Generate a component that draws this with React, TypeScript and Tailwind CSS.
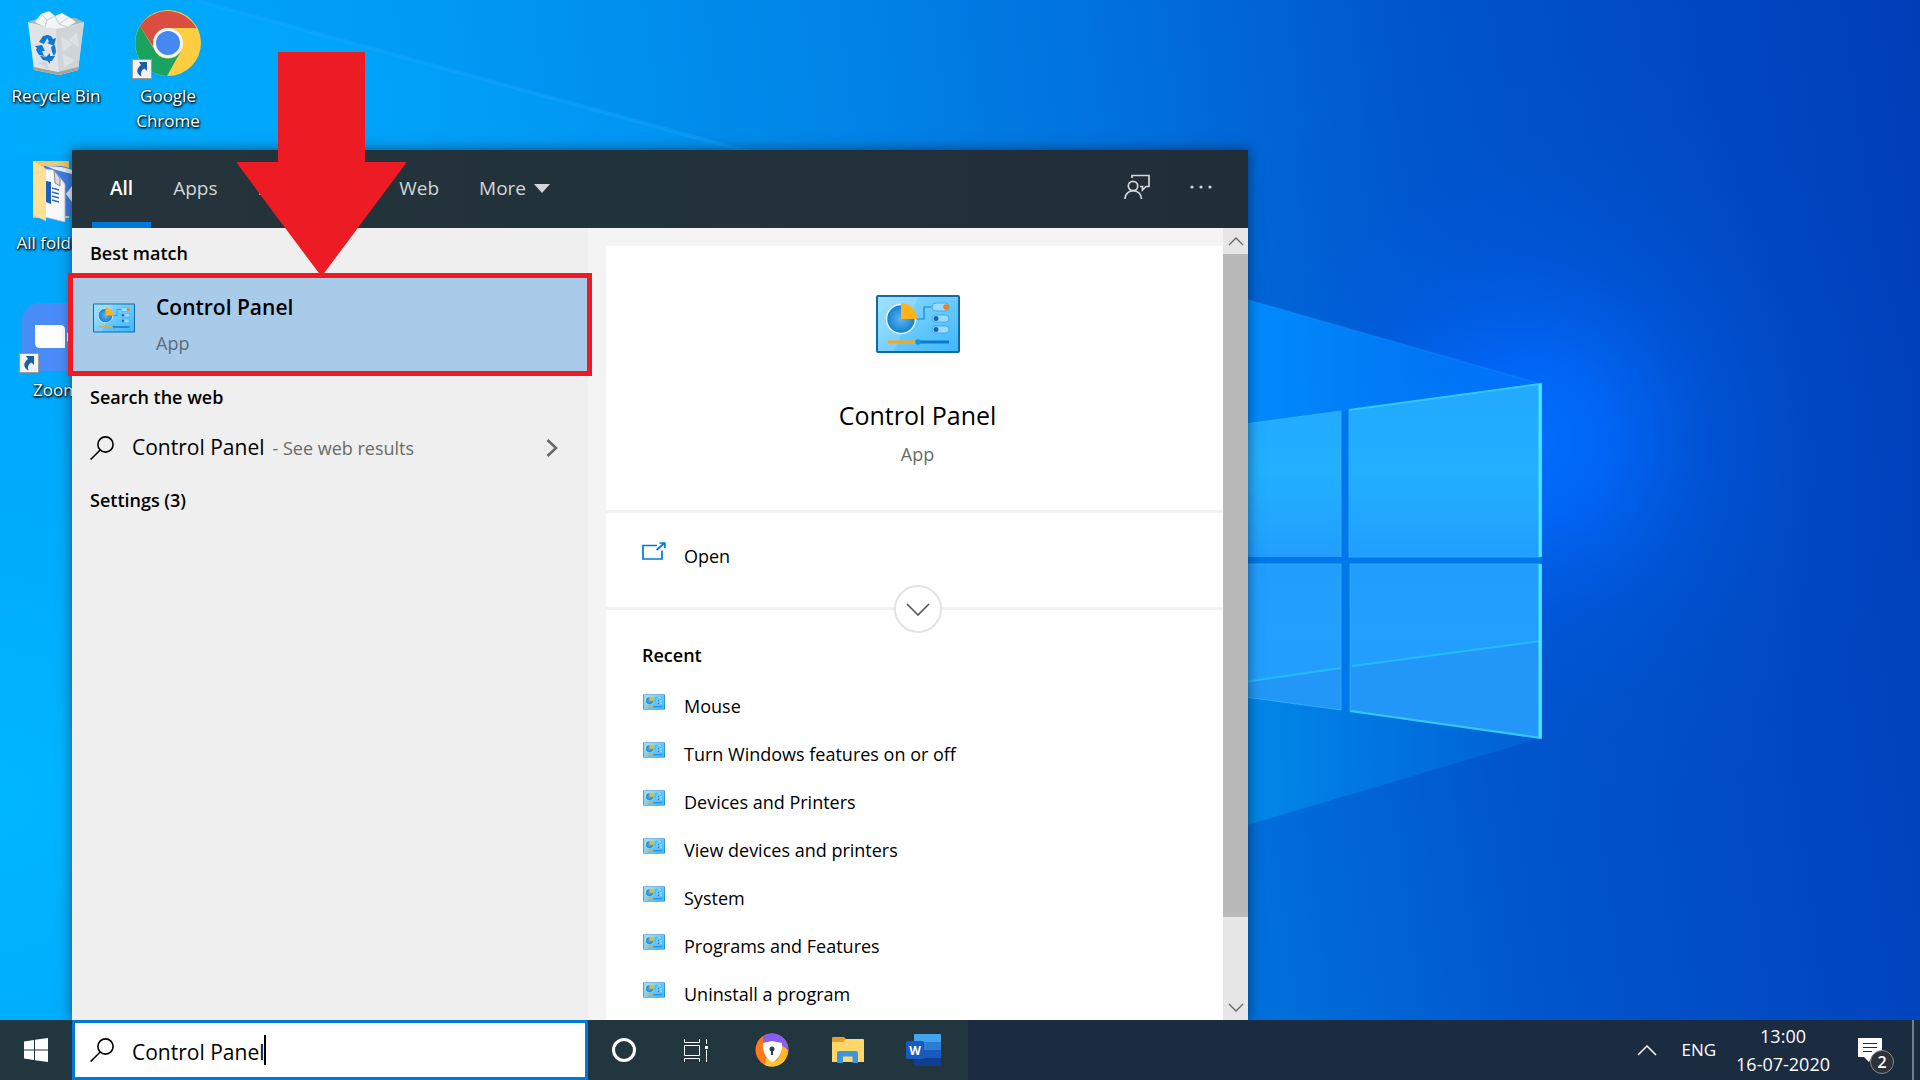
import { useId, useState } from "react";
import type { ReactNode } from "react";

type IconProps = { className?: string };

const tabs = ["All", "Apps", "Documents", "Web"];

const recentItems = [
  "Mouse",
  "Turn Windows features on or off",
  "Devices and Printers",
  "View devices and printers",
  "System",
  "Programs and Features",
  "Uninstall a program",
];

function Wallpaper() {
  return (
    <svg
      className="absolute inset-0 h-full w-full"
      viewBox="0 0 1920 1080"
      preserveAspectRatio="none"
      aria-hidden="true"
    >
      <defs>
        <linearGradient id="sky" x1="0" y1="0" x2="1880" y2="-250" gradientUnits="userSpaceOnUse">
          <stop offset="0" stopColor="#00a9fc" />
          <stop offset="0.2" stopColor="#009cf5" />
          <stop offset="0.42" stopColor="#0086e8" />
          <stop offset="0.6" stopColor="#006edb" />
          <stop offset="0.74" stopColor="#0055cc" />
          <stop offset="0.88" stopColor="#0049c3" />
          <stop offset="1" stopColor="#003eb8" />
        </linearGradient>
        <radialGradient id="glow" cx="1530" cy="440" r="400" gradientUnits="userSpaceOnUse">
          <stop offset="0" stopColor="#006eff" />
          <stop offset="0.2" stopColor="#006aff" stopOpacity="0.8" />
          <stop offset="0.45" stopColor="#005fea" stopOpacity="0.4" />
          <stop offset="0.7" stopColor="#0057da" stopOpacity="0.15" />
          <stop offset="1" stopColor="#0050d0" stopOpacity="0" />
        </radialGradient>
        <radialGradient id="corner" cx="0" cy="800" r="700" gradientUnits="userSpaceOnUse">
          <stop offset="0" stopColor="#00b7ff" />
          <stop offset="1" stopColor="#00a0fa" stopOpacity="0" />
        </radialGradient>
        <linearGradient id="ray" x1="200" y1="0" x2="760" y2="0" gradientUnits="userSpaceOnUse">
          <stop offset="0" stopColor="#00b0ff" stopOpacity="0.45" />
          <stop offset="1" stopColor="#00a0ff" stopOpacity="0.25" />
        </linearGradient>
        <linearGradient id="beam" x1="1240" y1="0" x2="1541" y2="0" gradientUnits="userSpaceOnUse">
          <stop offset="0" stopColor="#008cff" />
          <stop offset="1" stopColor="#0080ff" stopOpacity="0.4" />
        </linearGradient>
        <linearGradient id="lowBeam" x1="1240" y1="0" x2="1541" y2="0" gradientUnits="userSpaceOnUse">
          <stop offset="0" stopColor="#0089e8" />
          <stop offset="1" stopColor="#006fe0" stopOpacity="0.4" />
        </linearGradient>
        <linearGradient id="pane" x1="0" y1="383" x2="0" y2="738" gradientUnits="userSpaceOnUse">
          <stop offset="0" stopColor="#21a9ff" />
          <stop offset="0.25" stopColor="#22b0ff" />
          <stop offset="0.5" stopColor="#219dff" />
          <stop offset="1" stopColor="#22a0fd" />
        </linearGradient>
      </defs>
      <rect width="1920" height="1080" fill="url(#sky)" />
      <rect width="1920" height="1080" fill="url(#corner)" />
      <rect width="1920" height="1080" fill="url(#glow)" />
      <path d="M195 0 760 155H0V0Z" fill="url(#ray)" />
      <path d="M195 0 760 155" stroke="#20acff" strokeOpacity="0.3" strokeWidth="4" />
      <path d="M1200 286 1541 384V560H1200Z" fill="url(#beam)" />
      <path d="M1200 560H1541V738L1200 839Z" fill="url(#lowBeam)" />
      <path d="M1200 286 1541 384" stroke="#2aa2ff" strokeOpacity="0.2" strokeWidth="2" />
      <path d="M1230 557h311v7H1230zM1341 411 1349 410V711L1341 710Z" fill="#0077ea" />
      <g fill="url(#pane)">
        <path d="M1230 426 1341 411V557H1230Z" />
        <path d="M1349 410 1541 383V557H1349Z" />
        <path d="M1230 564H1341V710L1230 695Z" />
        <path d="M1350 564H1541V738L1350 711Z" />
      </g>
      <path d="M1230 684 1341 668V710L1230 695ZM1350 666 1541 641V738L1350 711Z" fill="#2494f5" opacity="0.75" />
      <path d="M1230 684 1341 668M1352 666 1541 641" stroke="#22bcff" strokeWidth="2" fill="none" />
      <path
        d="M1230 426 1341 411V557M1349 410V557H1541M1230 564h111V710L1230 695M1350 711V564H1541"
        stroke="#35b8ff"
        strokeOpacity="0.7"
        fill="none"
      />
      <path d="M1349 410 1541 384V557M1541 564V738L1350 711" stroke="#35c8ff" strokeWidth="2" fill="none" />
      <path d="M1540 384V557M1540 564V738" stroke="#45e6ff" strokeWidth="3" fill="none" />
    </svg>
  );
}

function ControlPanelIcon({ className }: IconProps) {
  const id = useId();
  return (
    <svg viewBox="0 0 84 60" className={className} aria-hidden="true">
      <defs>
        <linearGradient id={`${id}-bg`} x1="0" y1="0" x2="1" y2="1">
          <stop offset="0" stopColor="#8fdcff" />
          <stop offset="1" stopColor="#3fb8f9" />
        </linearGradient>
        <radialGradient id={`${id}-pie`}>
          <stop offset="0" stopColor="#5fb6ee" />
          <stop offset="1" stopColor="#0f7fd0" />
        </radialGradient>
      </defs>
      <rect x="0" y="1" width="84" height="58" rx="2" fill="#0f6ba6" />
      <rect x="2" y="3" width="80" height="54" fill={`url(#${id}-bg)`} />
      <path d="M2 3H42L18 57H2Z" fill="#fff" opacity="0.15" />
      <circle cx="25" cy="25" r="14.500" fill={`url(#${id}-pie)`} stroke="#e9f6ff" strokeWidth="1.500" />
      <path d="M25 25V9A16 16 0 0 1 41 25Z" fill="#ffb31a" />
      <path d="M41 25H48V13H56" fill="none" stroke="#1583cc" strokeWidth="1.200" />
      <g fill="#9adcff" stroke="#3d9dda" strokeWidth="0.800">
        <rect x="56" y="9" width="17" height="8" rx="4" />
        <rect x="56" y="21" width="17" height="7" rx="3.500" />
        <rect x="56" y="32" width="17" height="7" rx="3.500" />
      </g>
      <circle cx="70" cy="13" r="2.800" fill="#f97a16" />
      <circle cx="60" cy="24.500" r="2.500" fill="#0f6ab5" />
      <circle cx="60" cy="35.500" r="2.500" fill="#0f6ab5" />
      <path d="M12 48H42" stroke="#f9a61a" strokeWidth="3" />
      <path d="M42 48H73" stroke="#0f78d0" strokeWidth="3" />
      <circle cx="42" cy="48" r="2.800" fill="#0f94ea" />
    </svg>
  );
}

function SearchIcon({ className }: IconProps) {
  return (
    <svg viewBox="0 0 24 24" className={className} fill="none" stroke="currentColor" strokeWidth="1.600" aria-hidden="true">
      <circle cx="15.500" cy="8.500" r="7.600" />
      <path d="M10.200 14 0.600 23.500" />
    </svg>
  );
}

function RecycleBinIcon() {
  return (
    <svg viewBox="0 0 58 66" className="h-[66px] w-[58px]" aria-hidden="true">
      <path d="M1 12 29 18 57 12 51 60 32 65 7 60Z" fill="#e1e4e7" />
      <path d="M29 18 57 12 51 60 32 65Z" fill="#cfd4d8" />
      <path d="M1 12 12 8H48L57 12 29 19Z" fill="#aab4bb" />
      <path d="M8 12 14 4 22 1 28 6 35 3 42 7 49 12 40 17 29 19 18 17Z" fill="#f3f5f6" />
      <path d="M14 4 20 10 28 6 32 14 42 7M20 10 18 17M32 14 40 17" stroke="#c5ccd1" fill="none" />
      <path d="M34 26 46 34 36 42ZM50 22 42 30 52 38ZM36 44 48 50 37 58Z" fill="#dde1e4" />
      <path d="M10 52 22 60 20 52Z" fill="#d0d5d9" />
      <path d="M7 57 31 62 51 57 51 60 32 65 7 60Z" fill="#a7a29d" />
      <g fill="#0f78d0">
        <path d="M12 32 16 26 22 25 17 34ZM19 25 24 26 26 29 29 28 27 36 20 33 22 32Z" />
        <path d="M8 36 15 35 18 41 15 41 17 46 12 45 9 40 10 38ZM13 46 21 47V51L16 50Z" />
        <path d="M24 37 28 35 29 42 27 46 25 42ZM18 48 23 43V46L28 46 25 51 23 51V54Z" />
      </g>
    </svg>
  );
}

function ChromeIcon() {
  return (
    <svg viewBox="0 0 66 66" className="h-[66px] w-[66px]" aria-hidden="true">
      <circle cx="33" cy="33" r="33" fill="#ffcd40" />
      <path d="M5 16A33 33 0 0 1 61.500 18H33A15 15 0 0 0 19 38Z" fill="#db4f43" />
      <path d="M5 16A33 33 0 0 0 32 66L46 41A15 15 0 0 1 19 39Z" fill="#1aa260" />
      <circle cx="33" cy="33" r="15" fill="#f4f4f4" />
      <circle cx="33" cy="33" r="12" fill="#4688f1" />
    </svg>
  );
}

function FolderStackIcon() {
  return (
    <svg viewBox="0 0 48 64" className="mt-1 h-[64px] w-12" aria-hidden="true">
      <path d="M1 1H37V58H1Z" fill="#f3c766" />
      <path d="M12 6 30 6Q44 10 48 14V56H24Z" fill="#3f7fe8" />
      <path d="M14 6 30 7 48 12V16L24 10Z" fill="#e8eef5" />
      <path d="M34 34 40 26V42Z" fill="#eaf2ff" />
      <path d="M12 9 22 10 33 24V62L13 57Z" fill="#fafafa" stroke="#b9bec4" strokeWidth="0.800" />
      <path d="M22 10 23 23 28 26V18Z" fill="#d9dde1" stroke="#6d7378" strokeWidth="0.800" />
      <path d="M14 21 19 22V44L14 42Z" fill="#1d5fb8" />
      <path d="M20 28 27 30M20 32 27 34M20 36 27 38M20 40 27 42" stroke="#2c6fc4" strokeWidth="1.500" />
      <path d="M1 1 14 9V61L1 55Z" fill="#ffe096" />
    </svg>
  );
}

function ZoomAppIcon() {
  return (
    <svg viewBox="0 0 68 68" className="h-[68px] w-[68px]" aria-hidden="true">
      <rect width="68" height="68" rx="18" fill="#4a8cf7" />
      <path d="M13 22H38Q43 22 43 27V45H18Q13 45 13 40Z" fill="#fff" />
      <path d="M45 30 56 23V45L45 38Z" fill="#fff" />
    </svg>
  );
}

function ShortcutBadge() {
  return (
    <svg viewBox="0 0 20 20" className="absolute bottom-0 left-[-3px] h-5 w-5" aria-hidden="true">
      <rect x="0.500" y="0.500" width="19" height="19" fill="#f2f2f2" stroke="#9b9b9b" />
      <path d="M7 3H15V12L12.500 9.500C9 11.500 8.500 14 9.500 17.500 4.500 15 3.500 10 9 6Z" fill="#1c5f9e" />
    </svg>
  );
}

type DesktopItemProps = { label: string; shortcut?: boolean; children: ReactNode };

function DesktopItem({ label, shortcut, children }: DesktopItemProps) {
  return (
    <button className="flex w-28 flex-col items-center gap-1 text-center text-[17px] leading-[25px] text-white [text-shadow:1px_1px_2px_#000,0_1px_3px_#000]">
      <span className="relative flex h-[72px] items-center">
        {children}
        {shortcut ? <ShortcutBadge /> : null}
      </span>
      <span>{label}</span>
    </button>
  );
}

function SearchHeader() {
  const [active, setActive] = useState("All");

  return (
    <header className="flex h-[78px] shrink-0 items-stretch justify-between bg-linear-to-r from-[#25343b] via-[#22323a] to-[#222d3a] text-[19px] text-[#d3d6d8]">
      <nav className="flex gap-1 pl-5">
        {tabs.map((tab) => (
          <button
            key={tab}
            onClick={() => setActive(tab)}
            className={
              tab === active
                ? "border-b-[6px] border-[#0078d7] px-[18px] pt-1 font-semibold text-white"
                : "border-b-[6px] border-transparent px-[18px] pt-1"
            }
          >
            {tab}
          </button>
        ))}
        <button className="flex items-center gap-2 border-b-[6px] border-transparent px-[18px] pt-1">
          More
          <svg viewBox="0 0 16 9" className="h-[9px] w-4" fill="currentColor" aria-hidden="true">
            <path d="M0 0H16L8 9Z" />
          </svg>
        </button>
      </nav>
      <div className="flex items-center gap-10 pr-9 pb-1">
        <button aria-label="Feedback">
          <svg viewBox="0 0 26 26" className="h-[26px] w-[26px]" fill="none" stroke="currentColor" strokeWidth="1.700" aria-hidden="true">
            <path d="M8 4V1.500H25V12.500H22L18.500 16V12.500H16" />
            <circle cx="9" cy="12" r="4.700" />
            <path d="M1 25C1 14 17.500 14 17.500 25" />
          </svg>
        </button>
        <button aria-label="Options">
          <svg viewBox="0 0 22 4" className="h-1 w-[22px]" fill="currentColor" aria-hidden="true">
            <circle cx="2" cy="2" r="1.600" />
            <circle cx="11" cy="2" r="1.600" />
            <circle cx="20" cy="2" r="1.600" />
          </svg>
        </button>
      </div>
    </header>
  );
}

function ResultsColumn() {
  return (
    <section className="flex w-[516px] shrink-0 flex-col bg-[#efefef] text-black">
      <h2 className="px-[18px] pt-[13px] pb-3 text-[18px] leading-6 font-semibold">Best match</h2>
      <div className="relative">
        <button className="flex h-[95px] w-full items-start gap-[21px] bg-[#a9cbea] pt-3 pl-[21px] text-left">
          <ControlPanelIcon className="mt-3.5 h-[30px] w-[42px]" />
          <span className="flex flex-col">
            <span className="text-[21px] leading-9 font-semibold">Control Panel</span>
            <span className="text-[18px] leading-9 text-[#5d6a75]">App</span>
          </span>
        </button>
        <div className="pointer-events-none absolute -inset-x-1 -inset-y-1 border-[5px] border-[#ed1c24]" />
      </div>
      <h2 className="px-[18px] pt-[13px] pb-3 text-[18px] leading-6 font-semibold">Search the web</h2>
      <button className="flex h-[54px] items-center px-[18px] text-left">
        <SearchIcon className="mr-[18px] h-6 w-6" />
        <span className="text-[21px]">Control Panel</span>
        <span className="ml-2 text-[18px] text-[#6a6a6a]">- See web results</span>
        <svg viewBox="0 0 12 18" className="mr-3 ml-auto h-[18px] w-3" fill="none" stroke="#666" strokeWidth="2.500" aria-hidden="true">
          <path d="M1.500 1 10 9 1.500 17" />
        </svg>
      </button>
      <h2 className="px-[18px] pt-[13px] text-[18px] leading-6 font-semibold">Settings (3)</h2>
    </section>
  );
}

function DetailsColumn() {
  return (
    <section className="flex min-w-0 flex-1 bg-[#f4f4f4] text-black">
      <div className="mt-[18px] ml-[18px] flex min-w-0 flex-1 flex-col overflow-hidden bg-white">
        <div className="flex h-[267px] shrink-0 flex-col items-center border-b-[3px] border-[#f2f2f2] pt-12 pl-1.5">
          <ControlPanelIcon className="h-[60px] w-[84px]" />
          <h1 className="mt-[43px] text-[25px] leading-9">Control Panel</h1>
          <p className="mt-[5px] text-[18px] leading-8 text-[#6a6a6a]">App</p>
        </div>
        <div className="relative h-[97px] shrink-0 border-b-[3px] border-[#f2f2f2] px-9 pt-[29px]">
          <button className="flex items-start gap-[18px] text-[18px] leading-7">
            <svg viewBox="0 0 24 18" className="h-[18px] w-6" fill="none" stroke="#0078d7" strokeWidth="1.700" aria-hidden="true">
              <path d="M15 3.500H1V17H20V8.500M14.500 8 22 1.500M17.500 1H22.800V6" />
            </svg>
            Open
          </button>
          <div className="absolute inset-x-0 -bottom-[26px] flex justify-center pl-1.5">
            <button
              aria-label="Show more"
              className="flex h-12 w-12 items-center justify-center rounded-full border-2 border-[#e3e3e3] bg-white"
            >
              <svg viewBox="0 0 24 13" className="h-[13px] w-6" fill="none" stroke="#555" strokeWidth="1.600" aria-hidden="true">
                <path d="M1 1 12 12 23 1" />
              </svg>
            </button>
          </div>
        </div>
        <h2 className="px-9 pt-[33px] pb-3 text-[18px] leading-6 font-semibold">Recent</h2>
        <ul className="px-9">
          {recentItems.map((item) => (
            <li key={item}>
              <button className="flex h-12 items-start gap-[19px] pt-[13px] text-[18px] leading-7">
                <ControlPanelIcon className="mt-0.5 ml-px h-4 w-[22px]" />
                {item}
              </button>
            </li>
          ))}
        </ul>
      </div>
      <div className="flex w-[25px] shrink-0 flex-col bg-[#e6e6e6] text-[#666]">
        <button aria-label="Scroll up" className="flex h-[26px] items-center justify-center">
          <svg viewBox="0 0 16 9" className="h-[9px] w-4" fill="none" stroke="currentColor" strokeWidth="1.300" aria-hidden="true">
            <path d="M1 8 8 1 15 8" />
          </svg>
        </button>
        <div className="flex-663 bg-[#b9b9b9]" />
        <div className="flex-77" />
        <button aria-label="Scroll down" className="flex h-[26px] items-center justify-center">
          <svg viewBox="0 0 16 9" className="h-[9px] w-4" fill="none" stroke="currentColor" strokeWidth="1.300" aria-hidden="true">
            <path d="M1 1 8 8 15 1" />
          </svg>
        </button>
      </div>
    </section>
  );
}

function Pointer() {
  return (
    <svg viewBox="0 0 170 223" className="pointer-events-none absolute top-[52px] left-[237px] h-[223px] w-[170px]" aria-hidden="true">
      <path
        d="M42 1H127V111H168L86 221H83L1 111H42Z"
        fill="#ed1c24"
        stroke="#ed1c24"
        strokeWidth="2"
        strokeLinejoin="round"
      />
    </svg>
  );
}

function Taskbar() {
  const [query, setQuery] = useState("Control Panel");

  return (
    <footer className="relative flex h-[60px] shrink-0 items-stretch bg-[#1b2b40] text-white">
      <div className="flex items-stretch bg-[#21363f] pr-1">
        <button aria-label="Start" className="flex w-[72px] items-center justify-center">
          <svg viewBox="0 0 24 24" className="h-6 w-6" fill="#fff" aria-hidden="true">
            <path d="M0 3.400 10 2V11.500H0ZM11 1.800 24 0V11.500H11ZM0 12.500H10V22L0 20.600ZM11 12.500H24V24L11 22.200Z" />
          </svg>
        </button>
        <label className="flex w-[516px] items-center border-[3px] border-[#0078d7] bg-white pl-[15px] text-black">
          <SearchIcon className="mr-[18px] h-6 w-6 shrink-0" />
          <span className="relative flex items-center">
            <input
              aria-label="Search"
              value={query}
              onChange={(e) => setQuery(e.target.value)}
              className="field-sizing-content bg-transparent pt-1 text-[21px] leading-8 outline-none"
            />
            <span className="h-[30px] w-0.5 bg-black" />
          </span>
        </label>
        <button aria-label="Cortana" className="flex w-[72px] items-center justify-center">
          <span className="h-6 w-6 rounded-full border-[3px] border-white" />
        </button>
        <button aria-label="Task View" className="flex w-[72px] items-center justify-center">
          <svg viewBox="0 0 24 23" className="h-[23px] w-6" fill="none" stroke="#fff" aria-hidden="true">
            <path d="M0.500 0V3.500H15.500V0M0.500 6.500H15.500V16.500H0.500ZM0.500 23V19.500H15.500V23M22.500 0V5M22.500 11V23" />
            <rect x="21" y="7" width="3" height="3" fill="#fff" stroke="none" />
          </svg>
        </button>
        <button aria-label="Secure Browser" className="flex w-20 items-center justify-center">
          <svg viewBox="0 0 34 34" className="h-[34px] w-[34px]" aria-hidden="true">
            <circle cx="17" cy="17" r="16.500" fill="#ff7a1a" />
            <path d="M8 3A16.500 16.500 0 0 1 33 20C31 12 20 8 8 10Z" fill="#8a5cf6" />
            <path d="M33 18A16.500 16.500 0 0 1 10 32C22 32 27 22 27 13 30 14 32 16 33 18Z" fill="#ffb91f" />
            <path d="M10 32A16.500 16.500 0 0 0 30 27C24 29 16 28 11 25Z" fill="#ffc63a" />
            <path d="M8 10 17 8 27 10C28 19 23 27 17.500 29 12 27 7 19 8 10Z" fill="#fff" />
            <circle cx="17" cy="16" r="2.500" fill="#2b4057" />
            <path d="M16 17H18V22H16Z" fill="#2b4057" />
          </svg>
        </button>
        <button aria-label="File Explorer" className="flex w-[72px] items-center justify-center">
          <svg viewBox="0 0 32 27" className="h-[27px] w-8" aria-hidden="true">
            <path d="M0 1Q0 0 1 0H12L15 3H31V10H0Z" fill="#e79d26" />
            <path d="M0 5H11L14 2H31Q32 2 32 3V25H0Z" fill="#ffd76a" />
            <path d="M5 26V16Q5 14 7 14H24Q26 14 26 16V26H20.500V19.500H11V26Z" fill="#3a96dd" />
          </svg>
        </button>
        <button aria-label="Word" className="flex w-20 items-center justify-center">
          <svg viewBox="0 0 36 32" className="h-8 w-9" aria-hidden="true">
            <path d="M8 1Q8 0 9 0H34Q35 0 35 1V8H8Z" fill="#41a5ee" />
            <path d="M8 8H35V16H8Z" fill="#2b7cd3" />
            <path d="M8 16H35V24H8Z" fill="#185abd" />
            <path d="M8 24H35V31Q35 32 34 32H9Q8 32 8 31Z" fill="#103f91" />
            <rect y="7" width="18" height="18" rx="1.500" fill="#185abd" />
            <text x="9" y="20.500" textAnchor="middle" fontSize="12" fontWeight="700" fill="#fff">
              W
            </text>
          </svg>
        </button>
      </div>
      <div className="ml-auto flex items-center text-[17px]">
        <button aria-label="Show hidden icons" className="mr-6">
          <svg viewBox="0 0 20 11" className="h-[11px] w-5" fill="none" stroke="#fff" strokeWidth="1.500" aria-hidden="true">
            <path d="M1 10 10 1 19 10" />
          </svg>
        </button>
        <button>ENG</button>
        <button className="ml-5 flex flex-col items-center text-[18px] leading-7">
          <span>13:00</span>
          <span>16-07-2020</span>
        </button>
        <button aria-label="Notifications" className="relative mr-[30px] ml-7">
          <svg viewBox="0 0 24 24" className="h-6 w-6" aria-hidden="true">
            <path d="M0 0H24V19H14L11 24 6 19H0Z" fill="#fff" />
            <path d="M5 5.500H19M5 9.500H19M5 13.500H14" stroke="#1b2b40" strokeWidth="1.200" />
          </svg>
          <span className="absolute -right-3 -bottom-3 flex h-6 w-6 items-center justify-center rounded-full border border-[#8a8a8a] bg-[#2d3238] text-[16px] font-semibold">
            2
          </span>
        </button>
        <div className="mr-1.5 h-full w-0.5 bg-[#6f7f8d]" />
      </div>
    </footer>
  );
}

export default function App() {
  return (
    <div className="relative flex h-screen min-h-[800px] flex-col overflow-hidden bg-[#0078d7] font-['Open_Sans','Noto_Sans',sans-serif]">
      <Wallpaper />
      <main className="relative flex-1">
        <div className="flex items-start pt-[7px]">
          <div className="flex flex-col gap-[46px]">
            <DesktopItem label="Recycle Bin">
              <RecycleBinIcon />
            </DesktopItem>
            <DesktopItem label="All folders">
              <FolderStackIcon />
            </DesktopItem>
            <DesktopItem label="Zoom" shortcut>
              <ZoomAppIcon />
            </DesktopItem>
          </div>
          <DesktopItem label="Google Chrome" shortcut>
            <ChromeIcon />
          </DesktopItem>
        </div>
        <div className="absolute top-[150px] bottom-0 left-[72px] flex w-[61.25%] flex-col shadow-[0_0_12px_rgba(0,0,0,0.5)]">
          <SearchHeader />
          <div className="flex min-h-0 flex-1">
            <ResultsColumn />
            <DetailsColumn />
          </div>
        </div>
        <Pointer />
      </main>
      <Taskbar />
    </div>
  );
}
